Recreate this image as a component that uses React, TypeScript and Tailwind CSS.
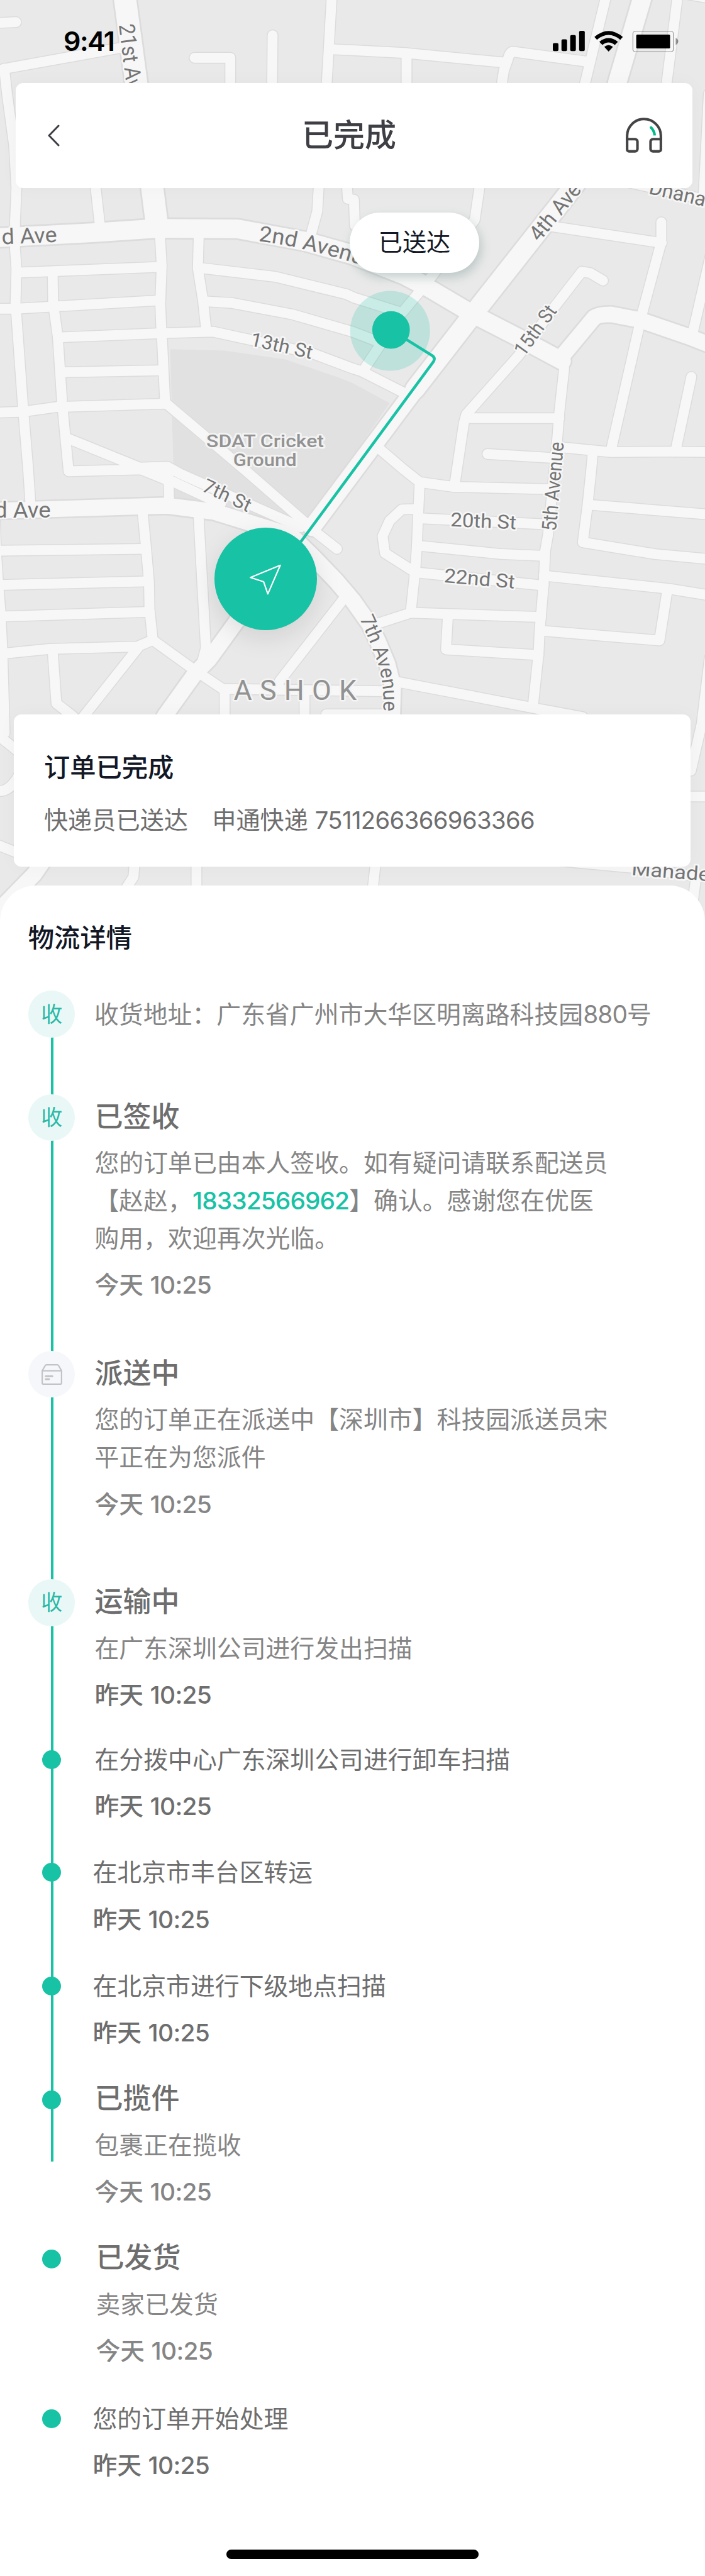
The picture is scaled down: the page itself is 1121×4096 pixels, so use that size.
import React from "react";

type Road = { d: string; w: number };

const minorRoads: string[] = [
  "M-10 49 L34 47",
  "M-10 151 L22 144 L255 102",
  "M9 146 L15 200 L30 310 L35 400 L32 470 L32 530 L35 572 L33 645 L49 867 L60 1000 L65 1075",
  "M203 395 L212 475",
  "M340 495 L344 565 L341 645 L343 698 L345 725 L351 851 L354 859",
  "M706 -10 L695 180 L678 400 L675 450 L660 505",
  "M580 75 L579 190",
  "M414 123 L490 123 L490 190",
  "M708 105 L750 107 L865 113 L1072 133",
  "M1066 190 L1072 150 L1080 128 Q1084 110 1092 110 L1248 131",
  "M865 113 L865 190",
  "M1290 -10 L1244 180",
  "M1442 -10 L1418 180",
  "M1440 -16 L1510 -4",
  "M1508 200 L1497 415",
  "M1310 382 L1400 402 L1510 427",
  "M738 390 L740 423 L753 425 L755 480",
  "M1025 370 L1020 400 L1010 468 L905 606 L850 672 L805 740 L772 790",
  "M433 571 L586 589 L737 626 L752 633 L850 664",
  "M433 641 L495 645 L622 669 L750 706 L802 726",
  "M423 495 L421 571 L432 640 L439 705",
  "M123 718 L345 709 L454 706 L665 752 L750 784 L769 790 L858 835",
  "M40 580 L342 568",
  "M-5 657 L33 657 L103 653 L341 639",
  "M132 792 L345 788",
  "M-5 878 L50 876 L122 866 L354 859",
  "M112 580 L113 645 L123 717 L132 855 L139 930 L146 1003 L300 999 L352 1020",
  "M142 932 L297 995 L356 993 L383 1008 L640 1122",
  "M297 997 L345 1014 L383 1032 L470 1072",
  "M358 1000 L360 1075",
  "M354 859 L521 1000 L654 1116",
  "M303 1085 L310 1158 L317 1238 L318 1296 L325 1362",
  "M-11 1090 L-9 1165 L-4 1240 L1 1302 L5 1385 L10 1560",
  "M-9 1172 L305 1168",
  "M-4 1245 L316 1237",
  "M0 1312 L318 1302",
  "M5 1391 L105 1381 L292 1376 L325 1362 L414 1426 L474 1466 L820 1471",
  "M294 1378 L183 1518 L150 1560",
  "M112 1385 L120 1497 L155 1524",
  "M422 1090 L438 1379 L430 1410",
  "M478 1470 L478 1530",
  "M648 1475 L648 1530",
  "M694 1520 L830 1520",
  "M733 1272 L596 1448 L585 1468",
  "M666 1128 L717 1168",
  "M1283 597 L1256 581 L1238 578 L1176 658 L1104 756 L992 882 L987 900 L972 1000 L967 1034",
  "M992 890 L1190 890",
  "M1200 765 L1200 787 L1190 878 L1184 955 L1166 1138 L1160 1172 L1157 1238 L1151 1310 L1148 1344 L1146 1389 L1134 1502",
  "M1407 473 L1407 515 L1366 668 L1300 958",
  "M1170 481 L1408 517",
  "M1515 530 L1473 712",
  "M1471 802 L1437 961",
  "M1186 951 L1298 962 L1427 961 L1510 962",
  "M1037 966 L1184 975",
  "M1261 966 L1258 1000 L1250 1076 L1240 1154 L1393 1179 L1510 1190",
  "M1252 1074 L1510 1095",
  "M1157 1225 L1424 1253 L1510 1267",
  "M1420 1255 L1403 1363 L1150 1342",
  "M806 954 L860 1000 L893 1026 L965 1036 L1176 1041",
  "M893 1026 L889 1110 L887 1162 L884 1207 L874 1302",
  "M890 1083 L855 1084 L829 1108 L814 1141 L819 1177 L882 1217",
  "M892 1103 L1166 1116",
  "M887 1161 L1066 1179 L1158 1183",
  "M884 1218 L1157 1246",
  "M800 1328 L874 1304 L1151 1313",
  "M953 1310 L949 1382 L1146 1394",
  "M840 1450 L1142 1508 L1240 1526",
  "M1510 1400 L1493 1540 L1470 1640",
  "M286 1840 L284 1866 L262 1900",
  "M418 1830 L418 1900",
  "M800 1830 L792 1900",
  "M1190 1832 L1340 1846 L1510 1868",
  "M1482 1860 L1470 1950",
  "M1460 1695 L1510 1695",
  "M-10 1560 L45 1604",
  "M-10 1682 Q18 1690 40 1650",
  "M-10 1796 L45 1818",
];

const majorRoads: Road[] = [
  { d: "M265 -10 L290 177 L324 400 L334 480", w: 47 },
  { d: "M-10 506 L201 495 L335 486 L505 487 L651 514 L750 542 L860 585 L900 606", w: 40 },
  { d: "M890 600 L1005 668 L1114 724 L1196 768", w: 37 },
  { d: "M1196 758 L1264 676 Q1274 669 1300 669 L1362 681 L1467 717 L1510 734", w: 33 },
  { d: "M1368 -10 L1313 177", w: 39 },
  { d: "M1250 355 L1218 400 L1018 654 L883 828", w: 41 },
  { d: "M900 806 L755 1000 L664 1122", w: 37 },
  { d: "M-10 1087 L354 1076 L455 1089 L620 1140 L670 1189 L715 1236 L750 1277 L786 1328 L804 1365 L824 1413 L836 1461 L834 1530", w: 34 },
  { d: "M540 1275 L505 1320 L445 1403 L416 1432 L350 1524", w: 33 },
  { d: "M95 1828 L73 1860 L-20 1955", w: 33 },
];

const allRoads: Road[] = [...minorRoads.map((d) => ({ d, w: 21 })), ...majorRoads];

function CityMap() {
  return (
    <svg
      className="absolute left-0 top-0 h-[1472px] w-[1121px]"
      viewBox="0 0 1500 1970"
      preserveAspectRatio="none"
      fontFamily="Roboto, 'Liberation Sans', sans-serif"
    >
      <rect width="1500" height="1970" fill="#e9e9e9" />
      <path
        d="M362 743 L478 746 L607 765 L717 802 L750 815 L829 858 L750 972 L641 1119 L371 1062 L366 886 Z"
        fill="#e1e1e1"
      />
      <g fill="none" strokeLinecap="round" strokeLinejoin="round">
        {allRoads.map((r, i) => (
          <path key={i} d={r.d} stroke="#dcdcdc" strokeWidth={r.w > 30 ? r.w + 7 : r.w + 4} />
        ))}
        {allRoads.map((r, i) => (
          <path key={i} d={r.d} stroke="#f7f7f7" strokeWidth={r.w} />
        ))}
      </g>

      <defs>
        <path id="second-avenue" d="M550 513 Q650 524 840 586" />
        <path id="seventh-avenue" d="M765 1316 Q790 1370 806 1418 Q820 1470 814 1535" />
      </defs>
      <g fill="#757575" stroke="#f7f7f7" strokeWidth="7" strokeLinejoin="round" paintOrder="stroke">
        <text transform="translate(4 520) rotate(-2.5)" fontSize="46" textLength="118" lengthAdjust="spacingAndGlyphs">d Ave</text>
        <text transform="translate(-12 1101)" fontSize="46" textLength="120" lengthAdjust="spacingAndGlyphs">d Ave</text>
        <text fontSize="46">
          <textPath href="#second-avenue" textLength="252" lengthAdjust="spacingAndGlyphs">2nd Avenue</textPath>
        </text>
        <text fontSize="43">
          <textPath href="#seventh-avenue" textLength="206" lengthAdjust="spacingAndGlyphs">7th Avenue</textPath>
        </text>
        <text transform="translate(531 735) rotate(12.5)" fontSize="41" textLength="134" lengthAdjust="spacingAndGlyphs">13th St</text>
        <text transform="translate(428 1044) rotate(25)" fontSize="41" textLength="109" lengthAdjust="spacingAndGlyphs">7th St</text>
        <text transform="translate(958 1120) rotate(2.5)" fontSize="41" textLength="140" lengthAdjust="spacingAndGlyphs">20th St</text>
        <text transform="translate(944 1239) rotate(5)" fontSize="41" textLength="151" lengthAdjust="spacingAndGlyphs">22nd St</text>
        <text transform="translate(1115 760) rotate(-54)" fontSize="42" textLength="121" lengthAdjust="spacingAndGlyphs">15th St</text>
        <text transform="translate(1147 516) rotate(-50.5)" fontSize="46" textLength="144" lengthAdjust="spacingAndGlyphs">4th Ave</text>
        <text transform="translate(1183 1131) rotate(-85)" fontSize="43" textLength="190" lengthAdjust="spacingAndGlyphs">5th Avenue</text>
        <text transform="translate(253 53) rotate(83)" fontSize="47" textLength="160" lengthAdjust="spacingAndGlyphs">21st Ave</text>
        <text transform="translate(1379 412) rotate(13)" fontSize="43">Dhana</text>
        <text transform="translate(1343 1862) rotate(4.5)" fontSize="41" textLength="167" lengthAdjust="spacingAndGlyphs">Mahade</text>
      </g>
      <g fill="#929292" stroke="#f4f4f4" strokeWidth="7" strokeLinejoin="round" paintOrder="stroke">
        <text x="439" y="951" fontSize="36" fontWeight="500" textLength="250" lengthAdjust="spacingAndGlyphs">SDAT Cricket</text>
        <text x="496" y="992" fontSize="36" fontWeight="500" textLength="135" lengthAdjust="spacingAndGlyphs">Ground</text>
        <text x="497" y="1489" fontSize="60" textLength="262">ASHOK</text>
      </g>

      <circle cx="830" cy="704" r="85" fill="#18c2a5" fillOpacity="0.2" />
      <path
        d="M832 702 L920 757 Q927 762 922 770 L640 1153"
        fill="none"
        stroke="#18c2a5"
        strokeWidth="6"
      />
      <circle cx="832" cy="702" r="40" fill="#18c2a5" />
    </svg>
  );
}

function StatusIcons() {
  return (
    <svg className="h-[34px] w-[200px]" viewBox="1176 66 267.6 45.5">
      <rect x="1176" y="92" width="12" height="17" rx="3" />
      <rect x="1194.4" y="84" width="12" height="25" rx="3" />
      <rect x="1213" y="75" width="12" height="34" rx="3" />
      <rect x="1232" y="66" width="12" height="43" rx="3" />
      <path d="M1264.5 79 Q1294.5 53.5 1325 79 L1319.5 85 Q1294.5 64.5 1270 85 Z" />
      <path d="M1275 89.5 Q1294.5 73.5 1314.5 89.5 L1308 96 Q1294.5 85.5 1281.5 96 Z" />
      <path d="M1285.5 100 Q1294.5 93 1304 100 L1294.7 110 Z" />
      <rect x="1346.5" y="67" width="86" height="43.5" rx="5" fill="none" stroke="#000" strokeOpacity="0.4" strokeWidth="1.6" />
      <rect x="1353.5" y="74" width="72" height="29.5" rx="2.5" />
      <path d="M1437.5 81 Q1443 84 1443 88.5 Q1443 93 1437.5 96 Z" fillOpacity="0.4" />
    </svg>
  );
}

function Headphones() {
  return (
    <svg className="h-[56px] w-[58px]" viewBox="0 0 78 75" fill="none" stroke="#444446" strokeWidth="5.5">
      <path d="M2.9 48 V39 a36 36 0 0 1 72.2 0 V48" />
      <path d="M2.9 46 H20 a5 5 0 0 1 5 5 V67 a5 5 0 0 1 -5 5 H7 a4 4 0 0 1 -4.1 -4 Z" />
      <path d="M75.1 46 H58 a5 5 0 0 0 -5 5 V67 a5 5 0 0 0 5 5 H71 a4 4 0 0 0 4.1 -4 Z" />
      <path d="M54 21 Q61 28 62 38" stroke="#00b98c" />
      <circle cx="54" cy="21" r="2.75" fill="#00b98c" stroke="none" />
    </svg>
  );
}

function BoxIcon() {
  return (
    <svg className="h-[33px] w-[33px]" viewBox="0 0 44 44" fill="none" stroke="#c3c3c5" strokeWidth="3" strokeLinejoin="round">
      <path d="M1.5 14 L8 3 Q9 1.5 10.5 1.5 H33.5 Q35 1.5 36 3 L42.5 14" />
      <path d="M1.5 14 H42.5 V40 Q42.5 42.5 40 42.5 H4 Q1.5 42.5 1.5 40 Z" />
      <path d="M9 25.5 H23 M9 32 H16" strokeWidth="4" strokeLinecap="round" />
    </svg>
  );
}

type Marker = "receive" | "box" | "dot";

interface TrackEvent {
  marker: Marker;
  size: string;
  indent: string;
  title?: string;
  lines: React.ReactNode[];
  linesTone: string;
  day?: string;
  timeTone?: string;
}

const dark = "text-[#6e6e6e]";
const light = "text-[#858585]";

const events: TrackEvent[] = [
  {
    marker: "receive", size: "h-[164.4px]", indent: "pl-[30.5px]", linesTone: light,
    lines: [
      <>
        收货地址：广东省广州市大华区明离路科技园<span className="tracking-[-0.9px]">880</span>号
      </>,
    ],
  },
  {
    marker: "receive", size: "h-[408px]", indent: "pl-[31px]", title: "已签收", linesTone: light,
    lines: [
      "您的订单已由本人签收。如有疑问请联系配送员",
      <>
        【赵赵，<span className="font-medium tracking-[-0.9px] text-[#18c2a5]">18332566962</span>】确认。感谢您在优医
      </>,
      "购用，欢迎再次光临。",
    ],
    day: "今天", timeTone: light,
  },
  {
    marker: "box", size: "h-[363.2px]", indent: "pl-[31px]", title: "派送中", linesTone: light,
    lines: ["您的订单正在派送中【深圳市】科技园派送员宋", "平正在为您派件"],
    day: "今天", timeTone: light,
  },
  {
    marker: "receive", size: "h-[249.6px]", indent: "pl-[31px]", title: "运输中", linesTone: light,
    lines: ["在广东深圳公司进行发出扫描"], day: "昨天", timeTone: dark,
  },
  {
    marker: "dot", size: "h-[179.4px]", indent: "pl-[31px]", linesTone: dark,
    lines: ["在分拨中心广东深圳公司进行卸车扫描"], day: "昨天", timeTone: dark,
  },
  {
    marker: "dot", size: "h-[180.4px]", indent: "pl-[28px]", linesTone: dark,
    lines: ["在北京市丰台区转运"], day: "昨天", timeTone: dark,
  },
  {
    marker: "dot", size: "h-[180.9px]", indent: "pl-[28px]", linesTone: dark,
    lines: ["在北京市进行下级地点扫描"], day: "昨天", timeTone: dark,
  },
  {
    marker: "dot", size: "h-[253px]", indent: "pl-[31px]", title: "已揽件", linesTone: light,
    lines: ["包裹正在揽收"], day: "今天", timeTone: light,
  },
  {
    marker: "dot", size: "h-[254px]", indent: "pl-[33px]", title: "已发货", linesTone: light,
    lines: ["卖家已发货"], day: "今天", timeTone: light,
  },
  {
    marker: "dot", size: "h-[180px]", indent: "pl-[28px]", linesTone: dark,
    lines: ["您的订单开始处理"], day: "昨天", timeTone: dark,
  },
];

function EventMarker({ kind }: { kind: Marker }) {
  if (kind === "dot") {
    return <span className="size-[30px] rounded-full bg-[#18c2a5]" />;
  }
  if (kind === "box") {
    return (
      <span className="flex size-[74.7px] items-center justify-center rounded-full bg-[#f5f7fa]">
        <BoxIcon />
      </span>
    );
  }
  return (
    <span className="flex size-[74.7px] items-center justify-center rounded-full bg-[#e9f8f6] text-[34px] leading-none text-[#2bb8a5]">
      收
    </span>
  );
}

function EventRow({ event }: { event: TrackEvent }) {
  return (
    <li className={`flex ${event.size}`}>
      <div className="flex h-[74.7px] w-[74.7px] shrink-0 items-center justify-center">
        <EventMarker kind={event.marker} />
      </div>
      <div className={`whitespace-nowrap text-[38.86px] leading-[59.8px] ${event.indent}`}>
        {event.title ? (
          <h3 className="mb-[5px] h-[74.7px] text-[45px] font-medium leading-[72px] text-[#6e6e6e]">{event.title}</h3>
        ) : (
          <div className="h-[7.5px]" />
        )}
        {event.lines.map((line, i) => (
          <p key={i} className={event.linesTone}>{line}</p>
        ))}
        {event.day && (
          <p className={`mt-[14.5px] font-medium ${event.timeTone}`}>
            {event.day} <span className="tracking-[-0.7px]">10:25</span>
          </p>
        )}
      </div>
    </li>
  );
}

export default function App() {
  return (
    <div className="relative flex h-[4096px] w-[1121px] flex-col overflow-hidden bg-white font-[Inter,'Noto_Sans_CJK_SC',sans-serif]">
      <CityMap />

      <header className="relative flex h-[131.5px] items-center justify-between pl-[101px] pr-[42.5px]">
        <span className="text-[43px] font-semibold leading-none tracking-[-1.6px] text-black">9:41</span>
        <StatusIcons />
      </header>

      <nav className="relative ml-[25.4px] grid h-[167.5px] w-[1076px] grid-cols-[1fr_auto_1fr] items-center rounded-[12px] bg-white shadow-[0_0_30px_rgba(0,0,0,0.03)]">
        <svg className="ml-[50px] h-[35px] w-[20px]" viewBox="0 0 20 35" fill="none" stroke="#3e3f45" strokeWidth="3" strokeLinecap="round" strokeLinejoin="round">
          <path d="M18 2 L3 17.5 L18 33" />
        </svg>
        <h1 className="pr-[17px] text-[50px] font-medium leading-none text-[#3e3f45]">已完成</h1>
        <div className="mr-[48px] flex justify-end">
          <Headphones />
        </div>
      </nav>

      <section className="relative h-[837px]">
        <div className="absolute left-[556px] top-[39px] flex h-[95.5px] w-[206px] items-center justify-center rounded-full bg-white text-[38.2px] text-[#131826] shadow-[3px_7px_16px_rgba(70,110,105,0.28)]">
          已送达
        </div>
        <div className="absolute left-[341px] top-[539.5px] size-[163px] rounded-full bg-[#18c2a5] shadow-[0_12px_40px_rgba(0,0,0,0.1)]">
          <svg className="size-full" viewBox="456 1122 218 218" fill="none" stroke="#fff" strokeWidth="3" strokeLinejoin="round">
            <path d="M596 1202 L532.5 1228 L560.5 1237 L569.5 1263 Z" />
          </svg>
        </div>
      </section>

      <section className="relative ml-[22.4px] flex h-[242px] w-[1076px] flex-col rounded-[12px] bg-white pl-[47.5px] pt-[54px] shadow-[0_0_30px_rgba(0,0,0,0.03)]">
        <h2 className="text-[41.3px] font-medium leading-[60px] text-[#131826]">订单已完成</h2>
        <p className="mt-[24px] whitespace-pre text-[38.2px] leading-[60px] text-[#6e6e6e]">
          {"快递员已送达　申通快递 "}
          <span className="tracking-[-0.6px]">7511266366963366</span>
        </p>
      </section>

      <main className="relative mt-[30px] flex-1 rounded-t-[57px] bg-white pl-[44.8px]">
        <h2 className="flex h-[167.4px] items-center text-[41.3px] font-medium text-[#131826]">物流详情</h2>
        <div className="relative">
          <span className="absolute left-[36px] top-[37px] h-[1825px] w-[4.5px] bg-[#18c2a5]" />
          <ol className="relative">
            {events.map((event, i) => (
              <EventRow key={i} event={event} />
            ))}
          </ol>
        </div>
        <div className="absolute bottom-[27px] left-[360px] h-[15px] w-[401px] rounded-full bg-black" />
      </main>
    </div>
  );
}
